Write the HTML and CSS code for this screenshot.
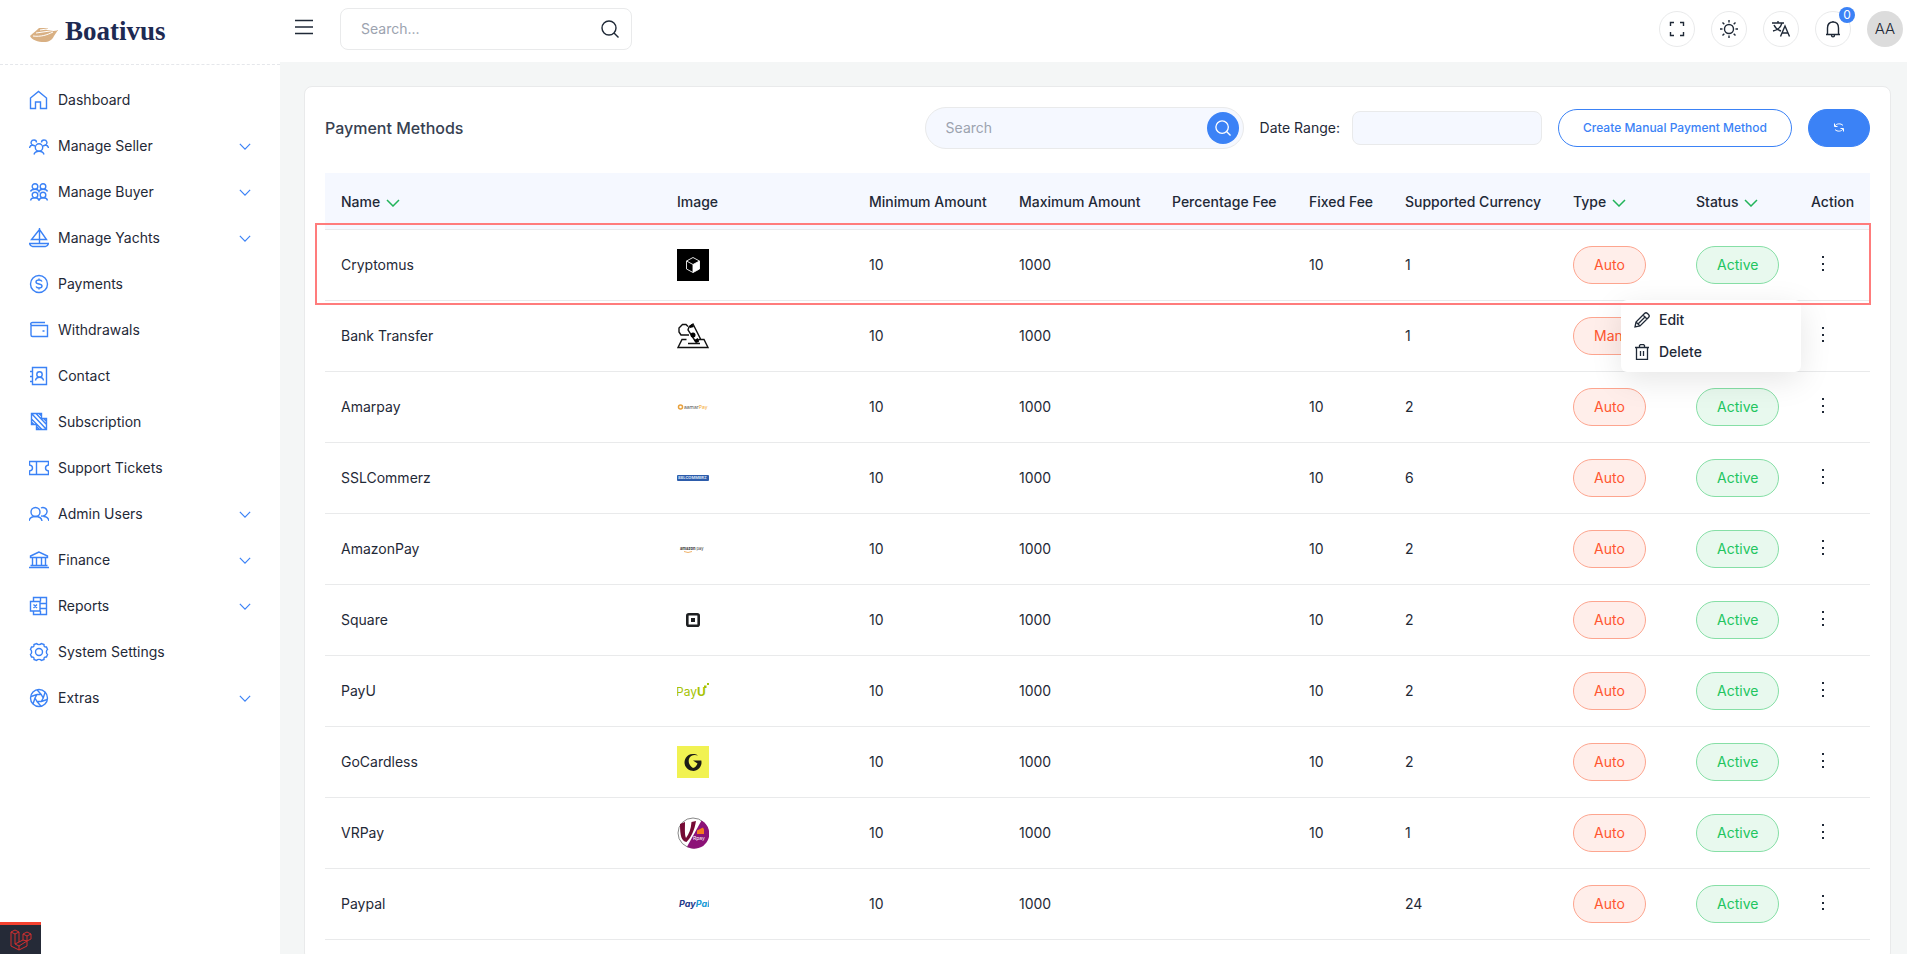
FILE: index.html
```html
<!DOCTYPE html>
<html lang="en">
<head>
  <meta charset="UTF-8">
  <meta name="viewport" content="width=device-width, initial-scale=1.0">
  <title>Payment Methods - Boativus</title>
  <link rel="stylesheet" href="styles.css">
</head>
<body>
  <!-- shared icons -->
  <svg class="sprite" aria-hidden="true">
    <symbol id="chevron" viewBox="0 0 14 8"><path d="M1 1l6 6 6-6"/></symbol>
    <symbol id="search" viewBox="0 0 18 18"><circle cx="8" cy="8" r="7"/><path d="M13 13l4.500 4.500"/></symbol>
    <symbol id="dots" viewBox="0 0 24 24"><path d="M11 3h2v2h-2zM11 10h2v2h-2zM11 16h2v2h-2z"/></symbol>
  </svg>

  <div class="layout">
    <aside class="sidebar">
      <a class="logo" href="#">
        <svg width="30" height="16" viewBox="0 0 30 16"><path d="M1 9C4 6 8 3 10 1h9l-2 2c4 0 8 0 12 0l-4 6c-2 4-5 6-10 6-6 0-12-2-14-6z" fill="#d9b083"/><path d="M7 6l21-3M4 9c8 1 14-1 20-4M11 3l7-1" stroke="#fff" fill="none"/></svg>
        Boativus
      </a>
      <nav class="menu">
        <a href="#"><svg viewBox="0 0 20 20"><path d="M1.500 8v10.500h5v-6.500h5v6.500h6V8l-8-6.500z"/></svg>Dashboard</a>
        <a href="#"><svg viewBox="0 0 20 20"><circle cx="10" cy="11.500" r="3.700"/><path d="M5 18.500c.5-2.200 2-3.300 5-3.300s4.500 1.100 5 3.300M.5 12c.3-1.800 1.200-2.800 3-3C1 7.500 2 4 5 4c1.500 0 2.500 1 2.500 2.500M19.500 12c-.3-1.800-1.200-2.800-3-3C19 7.500 18 4 15 4c-1.500 0-2.500 1-2.500 2.500M3.500 9L6 10M16.500 9L14 10"/></svg>Manage Seller<svg class="arrow"><use href="#chevron"/></svg></a>
        <a href="#"><svg viewBox="0 0 20 20"><circle cx="6" cy="4.500" r="2.800"/><circle cx="14" cy="4.500" r="2.800"/><circle cx="6" cy="13" r="2.800"/><circle cx="14" cy="13" r="2.800"/><path d="M1.500 9.500c.5-1.500 2-2.200 4.500-2.200s3.500.7 4 2.200c.5-1.500 2-2.200 4-2.200s4 .7 4.500 2.200M1.500 18.500c.5-2 2-2.700 4.500-2.700s3.500.7 4 2.700c.5-2 2-2.700 4-2.700s4 .7 4.500 2.700"/></svg>Manage Buyer<svg class="arrow"><use href="#chevron"/></svg></a>
        <a href="#"><svg viewBox="0 0 20 20"><path d="M10.500 0v15M10.500 1.500L2.500 11.500h15zM.5 15.500h19c-.5 2-1.500 3-3 3H3.500c-1.500 0-2.500-1-3-3z"/></svg>Manage Yachts<svg class="arrow"><use href="#chevron"/></svg></a>
        <a href="#"><svg viewBox="0 0 20 20"><circle cx="10" cy="10" r="8.500"/><path d="M13 7.500C12.500 6.500 11.500 6 10 6 8 6 7 6.700 7 8c0 2.700 6 1.300 6 4 0 1.300-1 2-3 2-1.500 0-2.500-.5-3-1.500M10 4.500V6M10 14v1.500"/></svg>Payments</a>
        <a href="#"><svg viewBox="0 0 20 20"><path d="M16 2.500H3.500c-2.500 0-2.500 3 0 3h15v11H3.500c-1 0-1.500-.5-1.500-1.500V4M13.500 11h2"/></svg>Withdrawals</a>
        <a href="#"><svg viewBox="0 0 20 20"><path d="M3.500 1.500h14v17h-14zM1 5.500h3M1 10.500h3M1 15.500h3M6.500 14.500c.3-2.200 1.500-3.300 4-3.300s3.700 1.100 4 3.300"/><circle cx="10.500" cy="8.500" r="2.700"/></svg>Contact</a>
        <a href="#"><svg viewBox="0 0 20 20"><path d="M2.500 1.500h10v5h5v11h-10v-5h-5zM2.500 1.500l15 16M7 1.500l10.500 11M2.500 7l10.500 10.500M7.500 14.500l3 3M12.500 6.500l3-.1M2.500 10l2.500 2.500M10 1.500l2.500 2.500M14.500 6.500l3 3"/></svg>Subscription</a>
        <a href="#"><svg viewBox="0 0 20 20"><path d="M.5 3.500h19V7c-4 .5-4 5.500 0 6v3.500H.5V13c4-.5 4-5.500 0-6zM7.500 4v12"/></svg>Support Tickets</a>
        <a href="#"><svg viewBox="0 0 20 20"><circle cx="6.500" cy="8" r="4.500"/><path d="M0 17c.5-3.500 3-4.500 6.500-4.500S12.500 13.500 13 17M12 4c2.500-1.500 6.500.5 6 4-.3 3-3.500 4.500-6 4M14.500 12.500c3 0 5 1.500 5.500 4.500"/></svg>Admin Users<svg class="arrow"><use href="#chevron"/></svg></a>
        <a href="#"><svg viewBox="0 0 20 20"><path d="M10 2L1.500 6v1.500h17V6zM0 17.500h20M1.500 15.500h17M3.500 7.500v8M7.500 7.500v8M12.500 7.500v8M16.500 7.500v8"/></svg>Finance<svg class="arrow"><use href="#chevron"/></svg></a>
        <a href="#"><svg viewBox="0 0 20 20"><path d="M4.500 5V1.500h13v17h-13V15M1.500 5.500h9.500v9.500H1.500zM4.500 8.500l3.500 3.500M8 8.500L4.500 12M11.500 1.500v4M11.500 15v3.500M11 7.500h6.500M11 12.500h6.500"/></svg>Reports<svg class="arrow"><use href="#chevron"/></svg></a>
        <a href="#"><svg viewBox="0 0 20 20"><circle cx="10" cy="10" r="3.500"/><path d="M7.500 1.500c1 1.500 4 1.500 5 0l2.500 1c-.3 2 .5 2.700 2.500 2.500l1 2.500c-1.500 1-1.500 4 0 5l-1 2.500c-2-.2-2.800.5-2.500 2.500l-2.500 1c-1-1.500-4-1.500-5 0L5 17.500c.3-2-.5-2.700-2.500-2.500l-1-2.500c1.500-1 1.500-4 0-5l1-2.500C4.500 5.200 5.300 4.500 5 2.500z"/></svg>System Settings</a>
        <a href="#"><svg viewBox="0 0 20 20"><circle cx="10" cy="10" r="8.500"/><path d="M8 6.500h4.200l2 3.500-2 3.500H8L6 10zM12.200 6.500L8 1.700M14.200 10l2-6M12.200 13.500l6-2M8 13.500l4 4.700M6 10l-2 6M8 6.500L2 8.500"/></svg>Extras<svg class="arrow"><use href="#chevron"/></svg></a>
      </nav>
    </aside>

    <div class="main">
      <header class="topbar">
        <button class="toggle" type="button" aria-label="Toggle menu"><svg width="18" height="16" viewBox="0 0 18 16"><path d="M0 1.500h18M0 8h18M0 14.500h18"/></svg></button>
        <form class="top-search">
          <input type="text" placeholder="Search..." aria-label="Search">
          <button type="button" aria-label="Search"><svg width="18" height="18"><use href="#search"/></svg></button>
        </form>
        <div class="top-actions">
          <button class="round" type="button" aria-label="Fullscreen"><svg width="18" height="18" viewBox="0 0 18 18"><path d="M6 2.500H2.500V6M12 2.500h3.500V6M6 15.500H2.500V12M12 15.500h3.500V12"/></svg></button>
          <button class="round" type="button" aria-label="Theme"><svg width="20" height="20" viewBox="0 0 20 20"><circle cx="10" cy="10" r="4.500"/><path d="M10 1v2.500M10 16.500V19M1 10h2.500M16.500 10H19M3.500 3.500l1.800 1.800M14.700 14.700l1.800 1.800M3.500 16.500l1.800-1.800M14.700 5.300l1.800-1.800"/></svg></button>
          <button class="round" type="button" aria-label="Language"><svg width="20" height="20" viewBox="0 0 20 20"><path d="M1 4h12M7 2v2M3 6c1.500 3.500 4 5 7 6M11 4c-1 4-4.500 7-9 8M9.500 17.500L14 7l4.500 10.500M11 14h6"/></svg></button>
          <button class="round" type="button" aria-label="Notifications"><svg width="18" height="18" viewBox="0 0 18 18"><path d="M2 14.500h14M3.500 14.500V8c0-3.500 2-6 5.500-6s5.500 2.500 5.500 6v6.500M7.500 15c0 2.500 3 2.500 3 0M9 1v1"/></svg><span class="count">0</span></button>
          <button class="avatar" type="button">AA</button>
        </div>
      </header>

      <main class="content">
        <section class="card">
          <div class="card-head">
            <h1>Payment Methods</h1>
            <div class="tools">
              <form class="pill-search">
                <input type="text" placeholder="Search" aria-label="Search methods">
                <button type="button" aria-label="Search"><svg width="16" height="16"><use href="#search"/></svg></button>
              </form>
              <div class="date">
                <label for="range">Date Range:</label>
                <input type="text" id="range">
              </div>
              <button class="btn btn-outline" type="button">Create Manual Payment Method</button>
              <button class="btn btn-primary" type="button" aria-label="Refresh"><svg width="12" height="12" viewBox="0 0 12 12"><path d="M1.500 1.500v3h3M10.500 9.500v-3h-3M2 4c1-2.500 6-3 8-.5M10 7c-1 2.500-6 3-8 .5"/></svg></button>
            </div>
          </div>

          <div class="table-wrap">
            <table>
              <colgroup>
                <col><col class="w-image"><col class="w-min"><col class="w-max"><col class="w-percent"><col class="w-fixed"><col class="w-currency"><col class="w-type"><col class="w-status"><col class="w-action">
              </colgroup>
              <thead>
                <tr>
                  <th>Name <svg class="sort"><use href="#chevron"/></svg></th>
                  <th>Image</th>
                  <th>Minimum Amount</th>
                  <th>Maximum Amount</th>
                  <th>Percentage Fee</th>
                  <th>Fixed Fee</th>
                  <th>Supported Currency</th>
                  <th>Type <svg class="sort"><use href="#chevron"/></svg></th>
                  <th>Status <svg class="sort"><use href="#chevron"/></svg></th>
                  <th>Action</th>
                </tr>
              </thead>
              <tbody>
                <tr>
                  <td>Cryptomus</td>
                  <td><svg class="brand" viewBox="0 0 32 32"><path d="M0 0h32v32H0z"/><path d="M16 8.500l6.500 3.500v8L16 23.500 9.500 20v-8zM9.500 12l6.500 3.500 6.500-3.500M16 15.500v8" fill="none" stroke="#ddd"/><path d="M16 15.500l6.500-3.500v8L16 23.500z" fill="#fff"/></svg></td>
                  <td>10</td><td>1000</td><td></td><td>10</td><td>1</td>
                  <td><span class="tag tag-red">Auto</span></td>
                  <td><span class="tag tag-green">Active</span></td>
                  <td class="action">
                    <button class="more" type="button" aria-label="Actions"><svg><use href="#dots"/></svg></button>
                    <div class="dropdown">
                      <a href="#"><svg width="16" height="16" viewBox="0 0 16 16"><path d="M1 15l1-5 8.500-8.500c1-1 2-1 3 0l1 1c1 1 1 2 0 3L6 14zM9 3l4 4M2 10l4 4M4.500 11.500l7-7"/></svg>Edit</a>
                      <a href="#"><svg width="16" height="16" viewBox="0 0 16 16"><path d="M1 3.500h14M2.500 3.500v12h11v-12M5.500 3.500v-2l1-1h3l1 1v2M6.500 7v5M9.500 7v5"/></svg>Delete</a>
                    </div>
                  </td>
                </tr>
                <tr>
                  <td>Bank Transfer</td>
                  <td><svg class="brand" viewBox="0 0 32 32"><path d="M9.500 19.500H5L1 27.500h30l-4-8h-4.500M11 23.500h12M11 6.500L9 4.500H5.500L2 8v4l2 3h8M12 7l4-3 7.500 15-5 2.500L11 10z" fill="none" stroke="#111" stroke-width="1.400"/><circle cx="16" cy="15" r="2.500"/><path d="M12 6l3-2 2 3-4 1zM17 20l4-2 1 4-3 1z"/></svg></td>
                  <td>10</td><td>1000</td><td></td><td></td><td>1</td>
                  <td><span class="tag tag-red">Manual</span></td>
                  <td><span class="tag tag-green">Active</span></td>
                  <td class="action"><button class="more" type="button" aria-label="Actions"><svg><use href="#dots"/></svg></button></td>
                </tr>
                <tr>
                  <td>Amarpay</td>
                  <td><svg class="brand" viewBox="0 0 32 32"><circle cx="3.500" cy="16" r="2" fill="none" stroke="#e8a13c" stroke-width="1.500"/><text class="tiny" x="7" y="18" fill="#555">aamar<tspan fill="#f5a623">Pay</tspan></text></svg></td>
                  <td>10</td><td>1000</td><td></td><td>10</td><td>2</td>
                  <td><span class="tag tag-red">Auto</span></td>
                  <td><span class="tag tag-green">Active</span></td>
                  <td class="action"><button class="more" type="button" aria-label="Actions"><svg><use href="#dots"/></svg></button></td>
                </tr>
                <tr>
                  <td>SSLCommerz</td>
                  <td><svg class="brand" viewBox="0 0 32 32"><rect y="13" width="32" height="6" rx="1" fill="#2d5cab"/><text class="tiny tiny-bold" x="1" y="17" fill="#dbe5f7">SSLCOMMERZ</text></svg></td>
                  <td>10</td><td>1000</td><td></td><td>10</td><td>6</td>
                  <td><span class="tag tag-red">Auto</span></td>
                  <td><span class="tag tag-green">Active</span></td>
                  <td class="action"><button class="more" type="button" aria-label="Actions"><svg><use href="#dots"/></svg></button></td>
                </tr>
                <tr>
                  <td>AmazonPay</td>
                  <td><svg class="brand" viewBox="0 0 32 32"><text class="tiny tiny-bold" x="3" y="17" fill="#333">amazon<tspan font-weight="400"> pay</tspan></text><path d="M7 18.500q4 2 8 0" fill="none" stroke="#f0b36a"/></svg></td>
                  <td>10</td><td>1000</td><td></td><td>10</td><td>2</td>
                  <td><span class="tag tag-red">Auto</span></td>
                  <td><span class="tag tag-green">Active</span></td>
                  <td class="action"><button class="more" type="button" aria-label="Actions"><svg><use href="#dots"/></svg></button></td>
                </tr>
                <tr>
                  <td>Square</td>
                  <td><svg class="brand" viewBox="0 0 32 32"><rect x="10.300" y="10.300" width="11.400" height="11.400" rx="1.500" fill="none" stroke="#1d1f21" stroke-width="2.600"/><path d="M14 14h4v4h-4z" fill="#1d1f21"/></svg></td>
                  <td>10</td><td>1000</td><td></td><td>10</td><td>2</td>
                  <td><span class="tag tag-red">Auto</span></td>
                  <td><span class="tag tag-green">Active</span></td>
                  <td class="action"><button class="more" type="button" aria-label="Actions"><svg><use href="#dots"/></svg></button></td>
                </tr>
                <tr>
                  <td>PayU</td>
                  <td><svg class="brand" viewBox="0 0 32 32"><text class="payu" x="-1" y="21" fill="#a6c307">Pay<tspan font-weight="700">U</tspan></text><path d="M27 10.500h2.500v2.500H27zM30 8h2v2h-2z" fill="#a6c307"/></svg></td>
                  <td>10</td><td>1000</td><td></td><td>10</td><td>2</td>
                  <td><span class="tag tag-red">Auto</span></td>
                  <td><span class="tag tag-green">Active</span></td>
                  <td class="action"><button class="more" type="button" aria-label="Actions"><svg><use href="#dots"/></svg></button></td>
                </tr>
                <tr>
                  <td>GoCardless</td>
                  <td><svg class="brand" viewBox="0 0 32 32"><path d="M0 0h32v32H0z" fill="#f1f252"/><path d="M21 9.500A8.500 8.500 0 1 0 24.300 14.500H16l4.500 3c-.7 2-2.500 4.500-4.500 4.500-3.500-2-5-6-4-9 1-3.500 5-5 9-3.500z" fill="#1c1b17"/></svg></td>
                  <td>10</td><td>1000</td><td></td><td>10</td><td>2</td>
                  <td><span class="tag tag-red">Auto</span></td>
                  <td><span class="tag tag-green">Active</span></td>
                  <td class="action"><button class="more" type="button" aria-label="Actions"><svg><use href="#dots"/></svg></button></td>
                </tr>
                <tr>
                  <td>VRPay</td>
                  <td><svg class="brand" viewBox="0 0 32 32"><circle cx="16" cy="16" r="15" fill="#fff" stroke="#555" stroke-width=".7"/><path d="M24.500 3.500A15 15 0 0 1 10 29.800z" fill="#8c1277"/><path d="M3 7l5-2c0 8-.5 12 1 16 3-4 5-9 5.500-16l4.500-1c-1.500 9-4.500 16-9.500 21-5-1-6.500-6-6.500-18z" fill="#750a35"/><path d="M20 13.500l6-3 1 2v4.500h-7z" fill="#f47a20"/><text class="tiny" x="16" y="23" fill="#fff">Rpay</text></svg></td>
                  <td>10</td><td>1000</td><td></td><td>10</td><td>1</td>
                  <td><span class="tag tag-red">Auto</span></td>
                  <td><span class="tag tag-green">Active</span></td>
                  <td class="action"><button class="more" type="button" aria-label="Actions"><svg><use href="#dots"/></svg></button></td>
                </tr>
                <tr>
                  <td>Paypal</td>
                  <td><svg class="brand" viewBox="0 0 32 32"><text class="paypal" x="2" y="19" fill="#1f3a8a">Pay<tspan fill="#169bd7">Pal</tspan></text></svg></td>
                  <td>10</td><td>1000</td><td></td><td></td><td>24</td>
                  <td><span class="tag tag-red">Auto</span></td>
                  <td><span class="tag tag-green">Active</span></td>
                  <td class="action"><button class="more" type="button" aria-label="Actions"><svg><use href="#dots"/></svg></button></td>
                </tr>
              </tbody>
            </table>
            <!-- marks the first row -->
            <div class="marker"></div>
          </div>
        </section>
      </main>
    </div>
  </div>

  <a class="debug" href="#" aria-label="Debug bar">
    <svg width="22" height="22" viewBox="0 0 22 22"><path d="M1 3l4-2 4 2v10l4-2V5l4-2 4 2v5l-4 2v5l-8 4-8-4zM1 3l4 2 4-2M5 5v10l4 2 8-5M9 13l-4 2M9 17v4M13 5l4 2 4-2M17 7v5M13 11l4 1"/></svg>
  </a>
</body>
</html>
```
FILE: styles.css
```css
* {
  box-sizing: border-box;
}
body {
  margin: 0;
  font-family: Inter, "Liberation Sans", sans-serif;
  font-size: 14px;
  line-height: 20px;
  color: #1f2937;
  background: #f4f6f6;
}
a {
  color: inherit;
  text-decoration: none;
}
button, input {
  font: inherit;
  color: inherit;
}
button {
  padding: 0;
  border: none;
  background: none;
  cursor: pointer;
}
svg {
  flex: none;
  fill: none;
  stroke: currentColor;
}
.sprite {
  position: absolute;
  width: 0;
  height: 0;
}
.layout {
  display: flex;
  height: 100vh;
}

/* sidebar */
.sidebar {
  flex: 0 0 280px;
  background: #fff;
}
.logo {
  display: flex;
  align-items: center;
  gap: 6px;
  height: 65px;
  padding: 0 0 2px 29px;
  border-bottom: 1px dashed #e5e7eb;
  font: bold 27px/32px "Liberation Serif", serif;
  color: #1e2a52;
}
.logo svg {
  margin-top: 8px;
  stroke: none;
}
.menu {
  padding-top: 12px;
}
.menu a {
  display: flex;
  align-items: center;
  gap: 9px;
  height: 46px;
  padding: 0 29px;
}
.menu svg {
  width: 20px;
  height: 20px;
  color: #3b82f6;
  stroke-width: 1.4;
}
.menu .arrow {
  width: 12px;
  height: 7px;
  margin-left: auto;
}

/* top bar */
.main {
  flex: 1;
  min-width: 0;
  overflow-y: auto;
  scrollbar-width: none;
}
.topbar {
  display: flex;
  align-items: center;
  height: 62px;
  padding: 0 4px 4px 15px;
  background: #fff;
}
.toggle {
  margin-right: 27px;
  padding-bottom: 5px;
  line-height: 0;
}
.toggle svg, .top-search svg, .round svg {
  stroke-width: 1.4;
}
.top-search {
  display: flex;
  align-items: center;
  width: 292px;
  height: 42px;
  padding: 0 12px 0 20px;
  border: 1px solid #e9eaeb;
  border-radius: 8px;
}
.top-search input, .pill-search input {
  flex: 1;
  min-width: 0;
  padding: 0;
  border: none;
  outline: none;
  background: none;
}
.top-search button {
  line-height: 0;
}
::placeholder {
  color: #9ca3af;
}
.top-actions {
  display: flex;
  gap: 16px;
  margin-left: auto;
}
.round, .avatar {
  position: relative;
  display: flex;
  align-items: center;
  justify-content: center;
  width: 36px;
  height: 36px;
  border: 1px solid #e9eaeb;
  border-radius: 50%;
}
.avatar {
  border: none;
  background: #dcdcdc;
  font-size: 15px;
  font-weight: 300;
}
.count {
  position: absolute;
  top: -5px;
  right: -5px;
  width: 16px;
  height: 16px;
  border-radius: 50%;
  background: #3b82f6;
  color: #fff;
  font-size: 12px;
  line-height: 16px;
}

/* card */
.content {
  padding: 24px 16px 24px 24px;
}
.card {
  padding: 20px;
  border: 1px solid #e9eaeb;
  border-radius: 8px;
  background: #fff;
}
.card-head {
  display: flex;
  align-items: center;
  justify-content: space-between;
  margin-bottom: 24px;
}
.card-head h1 {
  margin: 0;
  font-size: 16px;
  font-weight: 500;
  color: #374151;
}
.tools {
  display: flex;
  align-items: center;
  gap: 16px;
}
.pill-search {
  display: flex;
  align-items: center;
  width: 319px;
  height: 42px;
  padding: 0 4px 0 20px;
  border: 1px solid #e9eaeb;
  border-radius: 21px;
  background: #f5f8ff;
}
.pill-search button {
  display: flex;
  align-items: center;
  justify-content: center;
  width: 32px;
  height: 32px;
  border-radius: 50%;
  background: #3b82f6;
  color: #fff;
}
.pill-search svg {
  stroke-width: 1.5;
}
.date {
  display: flex;
  align-items: center;
  gap: 12px;
}
.date input {
  width: 190px;
  height: 34px;
  padding: 0 12px;
  border: 1px solid #e9eaeb;
  border-radius: 8px;
  background: #f5f8ff;
}
.btn {
  display: flex;
  align-items: center;
  justify-content: center;
  height: 38px;
  padding: 0 24px;
  border: 1px solid #3b82f6;
  border-radius: 20px;
  font-size: 12px;
  font-weight: 500;
}
.btn-outline {
  color: #3b82f6;
}
.btn-primary {
  background: #3b82f6;
  color: #fff;
}

/* table */
.table-wrap {
  position: relative;
}
table {
  width: 100%;
  border-collapse: separate;
  border-spacing: 0;
  table-layout: fixed;
}
.w-image { width: 192px; }
.w-min { width: 150px; }
.w-max { width: 153px; }
.w-percent { width: 137px; }
.w-fixed { width: 96px; }
.w-currency { width: 168px; }
.w-type { width: 123px; }
.w-status { width: 115px; }
.w-action { width: 75px; }
th, td {
  padding: 0 16px;
  border-bottom: 1px solid #e9eaeb;
  text-align: left;
  white-space: nowrap;
}
th {
  height: 57px;
  padding-top: 2px;
  background: #f5f8ff;
  font-weight: 500;
}
td {
  height: 71px;
}
.sort {
  width: 14px;
  height: 8px;
  margin-left: 2px;
  color: #22b45a;
  stroke-width: 1.5;
}
.brand {
  display: block;
  width: 32px;
  height: 32px;
  fill: #000;
  stroke: none;
}
.tiny {
  font-size: 5px;
}
.tiny-bold {
  font-size: 4px;
  font-weight: 700;
}
.payu {
  font-size: 12px;
}
.paypal {
  font-size: 9px;
  font-weight: 700;
  font-style: italic;
}
.tag {
  display: inline-block;
  padding: 8px 20px;
  border: 1px solid;
  border-radius: 20px;
}
.tag-red {
  border-color: #fda58f;
  background: #ffeeea;
  color: #ff5630;
}
.tag-green {
  border-color: #86dfa6;
  background: #e8f9ee;
  color: #22c55e;
}
.action {
  position: relative;
}
.more {
  display: block;
  width: 24px;
  height: 24px;
}
.more svg {
  width: 24px;
  height: 24px;
  fill: #1f2937;
  stroke: none;
}
.dropdown {
  position: absolute;
  z-index: 1;
  top: 100%;
  right: 69px;
  width: 180px;
  padding: 4px 13px;
  border-radius: 6px;
  background: #fff;
  box-shadow: 0 8px 32px rgba(0, 0, 0, 0.1);
  font-weight: 500;
}
.dropdown a {
  display: flex;
  align-items: center;
  gap: 9px;
  height: 32px;
}
.dropdown svg {
  stroke-width: 1.3;
}
.marker {
  position: absolute;
  z-index: 2;
  top: 50px;
  left: -10px;
  right: -1px;
  height: 82px;
  border: 2px solid #ff7c7c;
  pointer-events: none;
}

/* debug bar */
.debug {
  position: fixed;
  left: 0;
  bottom: 0;
  padding: 4px 9px 3px 10px;
  border-top: 3px solid #f4412f;
  background: #252a37;
  color: #d32f2f;
  line-height: 0;
}
```
